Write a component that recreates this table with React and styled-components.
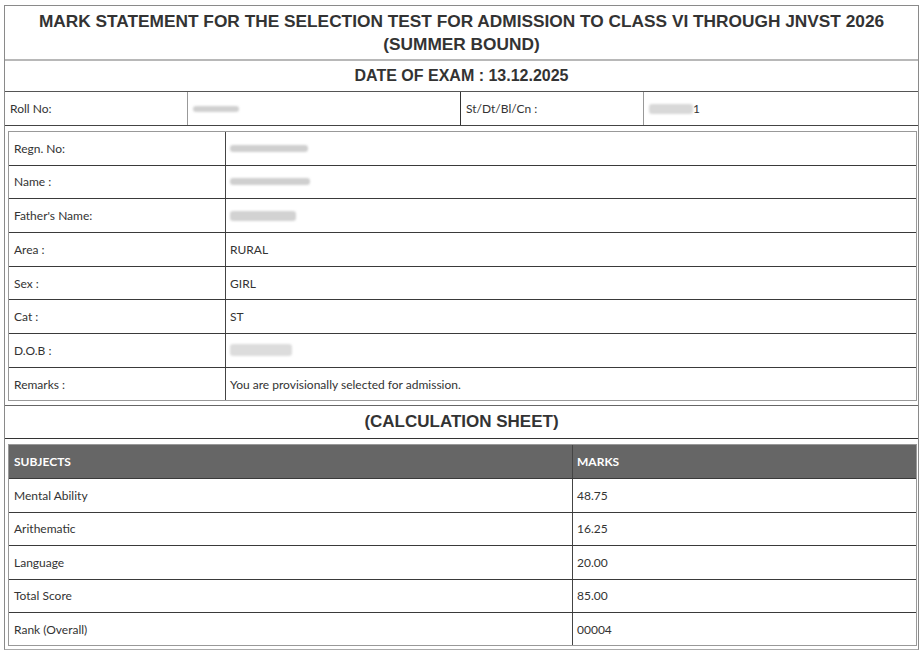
import React from 'react';
import styled, { createGlobalStyle } from 'styled-components';

const GlobalStyle = createGlobalStyle`
  html, body {
    margin: 0;
    padding: 0;
    background: #fff;
  }
  body {
    font-family: Lato, "Open Sans", Arial, sans-serif;
    color: #333;
  }
`;

const Page = styled.div`
  width: 924px;
  height: 657px;
  padding: 5px 5px 0 4px;
  box-sizing: border-box;
`;

const Sheet = styled.div`
  width: 915px;
  border: 1px solid #8a8a8a;
  border-bottom-color: #aaa;
  box-sizing: border-box;
`;

const TitleBlock = styled.div`
  height: 55px;
  padding-top: 4px;
  box-sizing: border-box;
  border-bottom: 2px solid #b8b8b8;
  font-family: "Liberation Sans", Arial, sans-serif;
  font-weight: bold;
  font-size: 17.3px;
  line-height: 23px;
  text-align: center;
  color: #333;
`;

const DateRow = styled.div`
  height: 30px;
  display: flex;
  align-items: center;
  justify-content: center;
  border-bottom: 1px solid #555;
  font-family: "Liberation Sans", Arial, sans-serif;
  font-weight: bold;
  font-size: 16px;
  color: #333;
`;

const InfoRow = styled.div`
  display: grid;
  grid-template-columns: 182px 273px 183px 1fr;
  height: 33px;
  border-bottom: 1px solid #444;
`;

const InfoCell = styled.div`
  display: flex;
  align-items: center;
  padding-left: 5px;
  font-size: 12px;
  color: #333;
  border-left: ${(p) => (p.$first ? 'none' : `1px solid ${p.$dark ? '#333' : '#999'}`)};
`;

const Section = styled.div`
  padding: ${(p) => p.$pad};
`;

const Table = styled.div`
  border: 1px solid #999;
  box-shadow: inset 0 0 0 1px #ddd;
`;

const Row = styled.div`
  display: grid;
  grid-template-columns: ${(p) => p.$cols};
  height: ${(p) => p.$h}px;
  border-top: ${(p) => (p.$first ? 'none' : '1px solid #3a3a3a')};
  background: ${(p) => (p.$head ? '#666' : '#fff')};
`;

const Cell = styled.div`
  display: flex;
  align-items: center;
  padding-left: ${(p) => (p.$first ? 5 : 4)}px;
  font-size: 12px;
  color: ${(p) => (p.$head ? '#fff' : '#333')};
  font-weight: ${(p) => (p.$head ? 'bold' : 'normal')};
  border-left: ${(p) => (p.$first ? 'none' : '1px solid #444')};
`;

const CalcTitle = styled.div`
  height: 32px;
  display: flex;
  align-items: center;
  justify-content: center;
  border-top: 1px solid #666;
  border-bottom: 1px solid #333;
  font-family: "Liberation Sans", Arial, sans-serif;
  font-weight: bold;
  font-size: 17px;
  color: #333;
`;

const Blur = styled.span`
  display: inline-block;
  width: ${(p) => p.$w}px;
  height: ${(p) => p.$h || 8}px;
  background: ${(p) => p.$c || '#d6d6d6'};
  filter: blur(1.2px);
  border-radius: 3px;
`;

const details = [
  ['Regn. No:', <Blur $w={78} $h={7} $c="#cfcfcf" />],
  ['Name :', <Blur $w={80} $h={7} $c="#cfcfcf" />],
  ["Father's Name:", <Blur $w={66} $h={10} $c="#d2d2d2" />],
  ['Area :', 'RURAL'],
  ['Sex :', 'GIRL'],
  ['Cat :', 'ST'],
  ['D.O.B :', <Blur $w={62} $h={12} $c="#dcdcdc" />],
  ['Remarks :', 'You are provisionally selected for admission.'],
];

const marks = [
  ['Mental Ability', '48.75'],
  ['Arithematic', '16.25'],
  ['Language', '20.00'],
  ['Total Score', '85.00'],
  ['Rank (Overall)', '00004'],
];

export default function App() {
  return (
    <Page>
      <GlobalStyle />
      <Sheet>
        <TitleBlock>
          MARK STATEMENT FOR THE SELECTION TEST FOR ADMISSION TO CLASS VI THROUGH JNVST 2026
          <br />
          (SUMMER BOUND)
        </TitleBlock>
        <DateRow>DATE OF EXAM : 13.12.2025</DateRow>
        <InfoRow>
          <InfoCell $first>Roll No:</InfoCell>
          <InfoCell>
            <Blur $w={46} $h={6} $c="#d0d0d0" />
          </InfoCell>
          <InfoCell $dark>St/Dt/Bl/Cn :</InfoCell>
          <InfoCell>
            <Blur $w={44} $h={10} $c="#d8d8d8" />
            <span>1</span>
          </InfoCell>
        </InfoRow>
        <Section $pad="5px 1px 4px 3px">
          <Table>
            {details.map(([label, value], i) => (
              <Row key={label} $cols="216px 1fr" $h={i === 0 ? 32.6 : 32.7} $first={i === 0}>
                <Cell $first>{label}</Cell>
                <Cell>{value}</Cell>
              </Row>
            ))}
          </Table>
        </Section>
        <CalcTitle>(CALCULATION SHEET)</CalcTitle>
        <Section $pad="5px 1px 3px 3px">
          <Table>
            <Row $cols="563px 1fr" $h={33} $first $head>
              <Cell $first $head>SUBJECTS</Cell>
              <Cell $head>MARKS</Cell>
            </Row>
            {marks.map(([subject, value]) => (
              <Row key={subject} $cols="563px 1fr" $h={32.4}>
                <Cell $first>{subject}</Cell>
                <Cell>{value}</Cell>
              </Row>
            ))}
          </Table>
        </Section>
      </Sheet>
    </Page>
  );
}
